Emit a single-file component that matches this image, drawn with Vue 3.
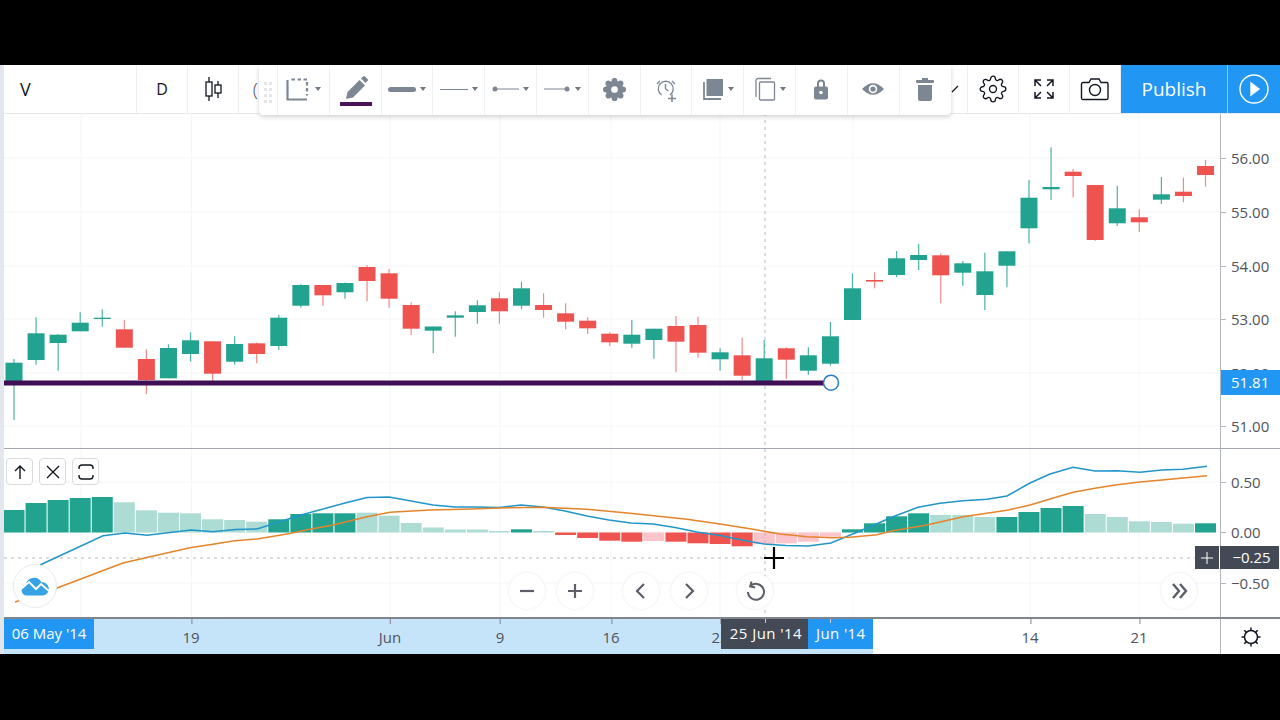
<script setup>
const raw = [
  [362.7,382,359,420,'g'],[333.3,360,317.3,364.7,'g'],[334.7,343,334,370.7,'g'],[322.7,331.3,312.3,331.3,'g'],[317.7,319,309.3,326.7,'g'],
  [329.3,347.7,320,347.7,'r'],[359,380,349.3,394,'r'],[348,378.3,344.3,378.3,'g'],[340.3,354,332.3,361.7,'g'],[341.3,373.7,341.3,381.7,'r'],
  [344,361.7,336.3,364.7,'g'],[343.3,354,342.6,363.3,'r'],[317.7,346,315,350,'g'],[285,305.7,284.3,307.7,'g'],[285,295.3,285,305.7,'r'],
  [283,292.3,282.6,298.7,'g'],[267,281,265,301.3,'r'],[273.3,298.7,269,307.7,'r'],[305,328.7,302.3,335,'r'],[326.5,330.7,326.5,353.3,'g'],
  [315.3,317.7,311.3,336.7,'g'],[305.3,312,300.3,323.7,'g'],[298.3,311.3,292.3,323.7,'r'],[288.3,305.7,281.7,309.3,'g'],[305,310,293.3,317.7,'r'],
  [313.3,321.7,303.3,329.3,'r'],[320.7,328.3,317.3,334,'r'],[333.7,342.3,332.3,346,'r'],[334.7,343.7,320,347.7,'g'],[328.7,340,328.7,358.7,'g'],
  [326,341.7,316,372.3,'r'],[325,352.7,316.7,357.7,'r'],[352.3,359.3,348.3,370.7,'g'],[355.3,375.7,337.7,380,'r'],[358.3,382,340,382,'g'],
  [348.3,359.7,347.3,379,'r'],[355.3,370.7,347.3,375,'g'],[336.3,363.7,322,365.7,'g'],[288.3,320,273.3,320,'g'],[280,281.6,272.3,288.3,'r'],
  [258.3,275,251,277.3,'g'],[255,260,244,270,'g'],[255.3,275.3,253.3,303.3,'r'],[263.3,272.7,261,285.7,'g'],[271.3,295,252.7,310,'g'],
  [251.3,265.7,251.3,287.3,'g'],[197.7,228.3,180,243.3,'g'],[187,189.3,147.3,200,'g'],[171.7,176,169,197.3,'r'],[185,240,185,240.7,'r'],
  [208.3,223.3,185.7,226,'g'],[217.3,222.3,209.3,232,'r'],[194.3,199.7,177,204,'g'],[191.7,196,177.7,202.3,'r'],[166,175,160,186.7,'r']
]
const candles = raw.map((c, i) => ({ x: 14 + i * 22.065, top: c[0], bottom: c[1], hi: c[2], lo: c[3], color: c[4] === 'g' ? '#22a38f' : '#ef5350', wick: c[4] === 'g' ? '#4db3a4' : '#f08a86' }))

const histRaw = [
  [510,'d'],[503,'d'],[500,'d'],[498,'d'],[497,'d'],[502.3,'l'],[510.3,'l'],[512.7,'l'],[513.3,'l'],[519.3,'l'],
  [520,'l'],[521.7,'l'],[519.3,'d'],[514,'d'],[513.3,'d'],[513.3,'d'],[512.7,'l'],[515.7,'l'],[523,'l'],[527.5,'l'],
  [529.5,'l'],[529.5,'l'],[531,'l'],[529.3,'d'],[531,'l'],[535,'r'],[538,'r'],[540.7,'r'],[541.7,'r'],[541,'p'],
  [541.7,'r'],[543.3,'r'],[544,'r'],[546.3,'r'],[544,'p'],[543.3,'p'],[541.7,'p'],[536.7,'p'],[529.3,'d'],[523.3,'d'],
  [516.3,'d'],[513.3,'d'],[515,'l'],[515,'l'],[517,'l'],[517,'d'],[512,'d'],[508,'d'],[506,'d'],[514,'l'],
  [517,'l'],[521.3,'l'],[522,'l'],[523.7,'l'],[523.3,'d']
]
const histColors = { d: '#22a38f', l: '#acdcd3', r: '#ef5350', p: '#fbc4ca' }
const zero = 532.5
const bars = histRaw.map((b, i) => ({
  x: 3.5 + i * 22.065,
  y: Math.min(b[0], zero),
  h: Math.abs(b[0] - zero),
  fill: histColors[b[1]]
}))

const macd = '40,565 103,535.7 125,533 147,535.3 191,530 213,531.7 235,529.5 257,529 279,522 301,515 345,503 367,497.5 389,497 433,505 455,507 477,507 499,507.5 521,505 543,507 565,511 587,516 609,520 631,523 653,524 675,527.5 697,532 720,535.5 742,540 764,544 786,545.5 808,546 831,543 860,531 893,516.7 918,507.3 940,503.3 963,500.7 987,499.3 1007,496 1030,483 1050,474 1073,467.3 1095,471 1117,470.7 1140,472.3 1162,470 1183,469.3 1207,466.3'
const signal = '15,602 57,588 123,563 150,556.7 190,547.7 213,544.3 233,541 257,539 287,534 310,529.3 333,525 367,516.7 390,512.3 430,510 463,509.3 500,508 543,507.3 587,509.3 630,513.3 687,519.3 720,524 753,529.3 780,534 807,536.7 833,537.7 850,537.3 877,534.7 893,530.7 927,525 963,516.7 1007,510.3 1030,505 1050,499 1073,492.3 1095,488.3 1117,484.7 1140,482 1162,480 1183,478 1207,475.7'

const gridX = [81, 191.5, 390, 500, 611, 720, 853, 1030, 1139]
const gridPrice = [158, 212, 266, 319, 373, 426]
const gridInd = [482, 532, 583]

const priceLabels = [
  { y: 158, t: '56.00' }, { y: 212, t: '55.00' }, { y: 266, t: '54.00' }, { y: 319, t: '53.00' }, { y: 373, t: '52.00' }, { y: 426, t: '51.00' }
]
const indLabels = [{ y: 482, t: '0.50' }, { y: 532, t: '0.00' }, { y: 583, t: '−0.50' }]
const timeLabels = [
  { x: 191, t: '19' }, { x: 390, t: 'Jun' }, { x: 500, t: '9' }, { x: 611, t: '16' }, { x: 720, t: '23' }, { x: 1030, t: '14' }, { x: 1139, t: '21' }
]
const gearPath = 'M19.4 15a1.65 1.65 0 0 0 .33 1.82l.06.06a2 2 0 0 1 0 2.83 2 2 0 0 1-2.83 0l-.06-.06a1.65 1.65 0 0 0-1.82-.33 1.65 1.65 0 0 0-1 1.51V21a2 2 0 0 1-2 2 2 2 0 0 1-2-2v-.09A1.65 1.65 0 0 0 9 19.4a1.65 1.65 0 0 0-1.82.33l-.06.06a2 2 0 0 1-2.83 0 2 2 0 0 1 0-2.83l.06-.06a1.65 1.65 0 0 0 .33-1.82 1.65 1.65 0 0 0-1.51-1H3a2 2 0 0 1-2-2 2 2 0 0 1 2-2h.09A1.65 1.65 0 0 0 4.6 9a1.65 1.65 0 0 0-.33-1.82l-.06-.06a2 2 0 0 1 0-2.83 2 2 0 0 1 2.83 0l.06.06a1.65 1.65 0 0 0 1.82.33H9a1.65 1.65 0 0 0 1-1.51V3a2 2 0 0 1 2-2 2 2 0 0 1 2 2v.09a1.65 1.65 0 0 0 1 1.51 1.65 1.65 0 0 0 1.82-.33l.06-.06a2 2 0 0 1 2.83 0 2 2 0 0 1 0 2.83l-.06.06a1.65 1.65 0 0 0-.33 1.82V9a1.65 1.65 0 0 0 1.51 1H21a2 2 0 0 1 2 2 2 2 0 0 1-2 2h-.09a1.65 1.65 0 0 0-1.51 1z'
</script>

<template>
  <div class="page">
    <div class="screen">
      <div class="strip"></div>
      <div class="main">
        <header class="topbar">
          <div class="cell symbol">V</div>
          <div class="cell interval">D</div>
          <div class="cell">
            <svg width="22" height="26" viewBox="0 0 22 26" fill="none" stroke="#131722" stroke-width="1.3">
              <path d="M7 1v24M16 5v17"/>
              <rect x="4" y="6" width="6" height="14" fill="#fff"/>
              <rect x="13" y="9" width="6" height="8" fill="#fff"/>
            </svg>
          </div>
          <div class="cell paren">(</div>
          <div class="spacer">
            <svg class="tail" width="8" height="8" viewBox="0 0 8 8" fill="none" stroke="#131722" stroke-width="1.2"><path d="M1 7l6-6"/></svg>
          </div>
          <div class="cell">
            <svg width="28" height="28" viewBox="0 0 24 24" fill="none" stroke="#131722" stroke-width="1.15"><circle cx="12" cy="12" r="3"/><path :d="gearPath"/></svg>
          </div>
          <div class="cell">
            <svg width="24" height="24" viewBox="0 0 24 24" fill="none" stroke="#131722" stroke-width="1.5">
              <path d="M3 9V3h6M3 3l6 6M15 3h6v6M21 3l-6 6M3 15v6h6M3 21l6-6M21 15v6h-6M21 21l-6-6"/>
            </svg>
          </div>
          <div class="cell">
            <svg width="30" height="26" viewBox="0 0 30 26" fill="none" stroke="#131722" stroke-width="1.4">
              <path d="M3 6.5h6l2-3.5h8l2 3.5h6a1.5 1.5 0 0 1 1 1.5v14a1.5 1.5 0 0 1-1.5 1.5h-23A1.5 1.5 0 0 1 1.5 22V8A1.5 1.5 0 0 1 3 6.5z"/>
              <circle cx="15" cy="14" r="5.5"/>
            </svg>
          </div>
          <button class="publish">Publish</button>
          <button class="play">
            <svg width="32" height="32" viewBox="0 0 32 32" fill="none" stroke="#fff" stroke-width="1.4">
              <circle cx="16" cy="16" r="14"/>
              <path d="M13 10l8 6-8 6z" fill="#fff"/>
            </svg>
          </button>
        </header>

        <section class="row price-row">
          <div class="pane">
            <svg class="canvas" width="1216" height="334" viewBox="4 114 1216 334">
              <line v-for="x in gridX" :key="'px'+x" :x1="x" :x2="x" y1="113" y2="448" class="grid"/>
              <line v-for="y in gridPrice" :key="'py'+y" x1="4" x2="1220" :y1="y" :y2="y" class="grid"/>
              <line x1="765" x2="765" y1="113" y2="448" class="cross"/>
              <g v-for="(c, i) in candles" :key="i">
                <line :x1="c.x" :x2="c.x" :y1="c.hi" :y2="c.lo" :stroke="c.wick" stroke-width="1.2"/>
                <rect :x="c.x - 8.5" :y="c.top" width="17" :height="c.bottom - c.top" :fill="c.color"/>
              </g>
              <line x1="4" x2="830" y1="383" y2="383" stroke="#3f0f55" stroke-width="5"/>
              <circle cx="831" cy="382.7" r="7.5" fill="#fff" stroke="#2a7fc4" stroke-width="1.5"/>
            </svg>
          </div>
          <div class="axis">
            <span v-for="l in priceLabels" :key="l.t" class="tick" :style="{ top: (l.y - 114) + 'px' }">{{ l.t }}</span>
            <span class="last-price">51.81</span>
          </div>
        </section>

        <section class="row ind-row">
          <div class="pane">
            <svg class="canvas" width="1216" height="168" viewBox="4 449 1216 168">
              <line v-for="x in gridX" :key="'ix'+x" :x1="x" :x2="x" y1="449" y2="617" class="grid"/>
              <line v-for="y in gridInd" :key="'iy'+y" x1="4" x2="1220" :y1="y" :y2="y" class="grid"/>
              <rect v-for="(b, i) in bars" :key="i" :x="b.x" :y="b.y" width="21" :height="b.h" :fill="b.fill"/>
              <line x1="765" x2="765" y1="449" y2="617" class="cross"/>
              <line x1="4" x2="1220" y1="558" y2="558" class="cross"/>
              <polyline :points="macd" fill="none" stroke="#2196c8" stroke-width="1.5"/>
              <polyline :points="signal" fill="none" stroke="#e4842b" stroke-width="1.5"/>
            </svg>

            <div class="legend">
              <button class="mini">
                <svg width="16" height="16" viewBox="0 0 16 16" fill="none" stroke="#131722" stroke-width="1.4"><path d="M8 15V2M3 7l5-5 5 5"/></svg>
              </button>
              <button class="mini">
                <svg width="16" height="16" viewBox="0 0 16 16" fill="none" stroke="#131722" stroke-width="1.4"><path d="M2 2l12 12M14 2L2 14"/></svg>
              </button>
              <button class="mini">
                <svg width="18" height="18" viewBox="0 0 18 18" fill="none" stroke="#131722" stroke-width="1.4"><path d="M2 6V5a3 3 0 0 1 3-3h8a3 3 0 0 1 3 3v1M2 12v1a3 3 0 0 0 3 3h8a3 3 0 0 0 3-3v-1"/></svg>
              </button>
            </div>

            <div class="logo-btn">
              <svg width="30" height="20" viewBox="0 0 30 20">
                <path d="M7 19.5a5.5 5.5 0 0 1-1.4-10.8 8.5 8.5 0 0 1 15.9-2.3 6.5 6.5 0 0 1 1.5 13.1z" fill="#35a2e4"/>
                <path d="M1 13l8-7 7 7 5-5 8 7" fill="none" stroke="#fff" stroke-width="2"/>
              </svg>
            </div>

            <div class="nav">
              <div class="nav-group">
                <button class="round">
                  <svg width="18" height="18" viewBox="0 0 18 18" stroke="#5c5f69" stroke-width="2.2"><path d="M2 9h14"/></svg>
                </button>
                <button class="round">
                  <svg width="18" height="18" viewBox="0 0 18 18" stroke="#5c5f69" stroke-width="2.2"><path d="M2 9h14M9 2v14"/></svg>
                </button>
              </div>
              <div class="nav-group">
                <button class="round">
                  <svg width="18" height="18" viewBox="0 0 18 18" fill="none" stroke="#5c5f69" stroke-width="2.2"><path d="M12 2L5 9l7 7"/></svg>
                </button>
                <button class="round">
                  <svg width="18" height="18" viewBox="0 0 18 18" fill="none" stroke="#5c5f69" stroke-width="2.2"><path d="M6 2l7 7-7 7"/></svg>
                </button>
              </div>
              <button class="round">
                <svg width="22" height="22" viewBox="0 0 22 22" fill="none" stroke="#5c5f69" stroke-width="2">
                  <path d="M6.5 6a8 8 0 1 1-2.5 6"/>
                  <path d="M7.5 1.5L6.2 6.4l5 1"/>
                </svg>
              </button>
            </div>

            <button class="round forward">
              <svg width="18" height="18" viewBox="0 0 18 18" fill="none" stroke="#5c5f69" stroke-width="2.4"><path d="M3 2l6 7-6 7M10 2l6 7-6 7"/></svg>
            </button>

            <svg class="cursor" width="20" height="22" viewBox="0 0 20 22" stroke="#000" stroke-width="2.2"><path d="M0 11h20M10 0v22"/></svg>

            <button class="plus-btn">
              <svg width="12" height="12" viewBox="0 0 12 12" stroke="#fff" stroke-width="1"><path d="M0 6h12M6 0v12"/></svg>
            </button>
          </div>
          <div class="axis ind-axis">
            <span v-for="l in indLabels" :key="l.t" class="tick" :style="{ top: (l.y - 449) + 'px' }">{{ l.t }}</span>
            <span class="cross-price">−0.25</span>
          </div>
        </section>

        <footer class="row time-row">
          <div class="time-scale">
            <div class="range"></div>
            <span v-for="l in timeLabels" :key="l.t" class="time-tick" :style="{ left: (l.x - 4) + 'px' }">{{ l.t }}</span>
            <span class="date start">06 May '14</span>
            <span class="date end">Jun '14</span>
            <span class="date cursor-date">25 Jun '14</span>
          </div>
          <div class="corner">
            <svg width="24" height="24" viewBox="0 0 24 24" fill="none" stroke="#131722" stroke-width="1.5">
              <circle cx="12" cy="12" r="6.5"/>
              <path d="M12 2.5v3M12 18.500v3M2.500 12h3M18.500 12h3M5.300 5.300l2.100 2.100M16.600 16.600l2.100 2.100M5.300 18.700l2.100-2.100M16.600 7.400l2.100-2.100"/>
            </svg>
          </div>
        </footer>
      </div>

      <!-- floating drawing toolbar -->
      <div class="floating">
        <div class="grip">
          <i v-for="n in 8" :key="n"></i>
        </div>
        <div class="f-cell">
          <svg width="26" height="26" viewBox="0 0 26 26" fill="none" stroke="#7d8794" stroke-width="2.2">
            <path d="M2.500 4v19.500H22"/>
            <path d="M6.500 3.500h15.500v16" stroke-dasharray="3.500 2.500"/>
          </svg>
          <span class="caret"></span>
        </div>
        <div class="f-cell pencil">
          <svg width="26" height="26" viewBox="0 0 26 26" fill="#7d8794">
            <path d="M4 25l1.500-7L17.500 6l5.500 5.500L11 23.500z"/>
            <path d="M19 4.500l2-2q1-1 2 0l2.500 2.500q1 1 0 2l-2 2z"/>
          </svg>
          <span class="pencil-bar"></span>
        </div>
        <div class="f-cell">
          <span class="stroke thick"></span>
          <span class="caret"></span>
        </div>
        <div class="f-cell">
          <span class="stroke thin"></span>
          <span class="caret"></span>
        </div>
        <div class="f-cell">
          <svg width="27" height="10" viewBox="0 0 27 10"><path d="M2 5h25" stroke="#7d8794" stroke-width="1"/><circle cx="3" cy="5" r="2.500" fill="#7d8794"/></svg>
          <span class="caret"></span>
        </div>
        <div class="f-cell">
          <svg width="27" height="10" viewBox="0 0 27 10"><path d="M0 5h25" stroke="#7d8794" stroke-width="1"/><circle cx="23" cy="5" r="2.500" fill="#7d8794"/></svg>
          <span class="caret"></span>
        </div>
        <div class="f-cell">
          <svg width="23" height="23" viewBox="0 0 24 24" fill="#7d8794" stroke="#7d8794" stroke-width="2.200"><path :d="gearPath"/><circle cx="12" cy="12" r="3.500" fill="#fff" stroke="none"/></svg>
        </div>
        <div class="f-cell">
          <svg width="26" height="26" viewBox="0 0 26 26" fill="none" stroke="#7d8794" stroke-width="1.400">
            <path d="M7 5l-3 3M19 5l3 3"/>
            <path d="M17 19a7.500 7.500 0 1 0-8.500 0"/>
            <path d="M12.500 8v5l3 2"/>
            <path d="M15 22.500h8M19 18.500v8" stroke-width="1.600"/>
          </svg>
        </div>
        <div class="f-cell">
          <svg width="22" height="22" viewBox="0 0 22 22">
            <path d="M2 4v17h17" fill="none" stroke="#7d8794" stroke-width="1.800"/>
            <rect x="4.500" y="1" width="16.500" height="17" fill="#7d8794"/>
          </svg>
          <span class="caret"></span>
        </div>
        <div class="f-cell">
          <svg width="22" height="24" viewBox="0 0 22 24" fill="none" stroke="#7d8794" stroke-width="1.300">
            <path d="M2 20V3.500a2 2 0 0 1 2-2h13"/>
            <rect x="5.500" y="5" width="15" height="18" fill="#fff" rx="1"/>
          </svg>
          <span class="caret"></span>
        </div>
        <div class="f-cell">
          <svg width="18" height="24" viewBox="0 0 18 24" fill="#7d8794">
            <path d="M5 10V6.500a4 4 0 0 1 8 0V10h-2V6.500a2 2 0 0 0-4 0V10z"/>
            <rect x="2" y="9.500" width="14" height="13" rx="2"/>
            <circle cx="9" cy="15.500" r="1.800" fill="#fff"/>
          </svg>
        </div>
        <div class="f-cell">
          <svg width="24" height="18" viewBox="0 0 24 18">
            <path d="M1 9q11-11.500 22 0q-11 11.500-22 0z" fill="#7d8794"/>
            <circle cx="12" cy="9" r="4.300" fill="#fff"/>
            <circle cx="12" cy="9" r="2.600" fill="#7d8794"/>
          </svg>
        </div>
        <div class="f-cell">
          <svg width="20" height="24" viewBox="0 0 20 24" fill="#7d8794">
            <rect x="7" y="1" width="6" height="3"/>
            <rect x="1" y="3" width="18" height="3" rx="1"/>
            <path d="M3 8h14v14a2 2 0 0 1-2 2H5a2 2 0 0 1-2-2z"/>
          </svg>
        </div>
      </div>
    </div>
  </div>
</template>

<style>
html, body { margin: 0; background: #000; }
</style>

<style scoped>
.page {
  width: 1280px;
  height: 720px;
  background: #000;
  padding-top: 65px;
  box-sizing: border-box;
  font-family: "Open Sans", "Liberation Sans", sans-serif;
  overflow: hidden;
}
.screen {
  position: relative;
  display: flex;
  height: 589px;
  background: #fff;
  color: #50535e;
}
.strip { width: 4px; flex: none; background: #e3e6ed; }
.main { width: 1276px; display: flex; flex-direction: column; }

.topbar {
  display: flex;
  height: 49px;
  box-sizing: border-box;
  border-bottom: 1px solid #e6e8ee;
  flex: none;
}
.cell {
  width: 51px;
  flex: none;
  box-sizing: border-box;
  display: flex;
  align-items: center;
  justify-content: center;
  border-right: 1px solid #eceef2;
  color: #131722;
}
.symbol { width: 133px; justify-content: flex-start; padding-left: 16px; font-size: 18px; font-weight: 400; }
.interval { font-size: 16px; }
.paren { justify-content: flex-end; padding-right: 32px; font-size: 19px; font-weight: 300; border-right: 0; color: #50535e; }
.spacer {
  flex: 1;
  border-right: 1px solid #eceef2;
  display: flex;
  align-items: center;
  justify-content: flex-end;
  padding-right: 8px;
}
.publish {
  width: 107px;
  flex: none;
  border: 0;
  background: #2196f3;
  color: #fff;
  font: 400 19px "Open Sans", "Liberation Sans", sans-serif;
  padding: 0;
  margin: 0;
  border-right: 1px solid #8ec8f5;
}
.play {
  width: 52px;
  flex: none;
  border: 0;
  padding: 0;
  background: #2196f3;
  display: flex;
  align-items: center;
  justify-content: center;
}

.row { display: flex; flex: none; }
.price-row { height: 335px; border-bottom: 1px solid #a4a8b0; box-sizing: border-box; }
.ind-row { height: 168px; }
.pane { position: relative; width: 1216px; flex: none; }
.canvas { display: block; }
.grid { stroke: #f4f5f7; stroke-width: 1; }
.cross { stroke: #b4b7be; stroke-width: 1; stroke-dasharray: 3 4; }

.axis {
  position: relative;
  flex: 1;
  border-left: 1px solid #b2b5be;
  font-size: 15px;
  color: #50535e;
}
.tick {
  position: absolute;
  left: 10px;
  transform: translateY(-50%);
  line-height: 20px;
}
.tick::before {
  content: "";
  position: absolute;
  left: -10px;
  top: 10px;
  width: 5px;
  height: 1px;
  background: #b2b5be;
}
.last-price {
  position: absolute;
  top: 256px;
  left: 0;
  right: 0;
  height: 25px;
  line-height: 24px;
  background: #2196f3;
  color: #fff;
  padding-left: 10px;
}
.cross-price {
  position: absolute;
  top: 97px;
  left: -1px;
  width: 59px;
  height: 23px;
  line-height: 22px;
  background: #434a55;
  color: #fff;
  text-align: center;
  padding-left: 4px;
  box-sizing: border-box;
}

.legend { position: absolute; left: 2px; top: 9px; display: flex; gap: 6px; }
.mini {
  width: 27px;
  height: 27px;
  padding: 0;
  box-sizing: border-box;
  background: #fff;
  border: 1px solid #d9dbe0;
  border-radius: 4px;
  display: flex;
  align-items: center;
  justify-content: center;
}
.logo-btn {
  position: absolute;
  left: 9px;
  top: 115px;
  width: 44px;
  height: 44px;
  box-sizing: border-box;
  border-radius: 50%;
  background: #fff;
  border: 1px solid #e9ebef;
  display: flex;
  align-items: center;
  justify-content: center;
}
.nav {
  position: absolute;
  left: 505px;
  top: 124px;
  display: flex;
  gap: 30px;
}
.nav-group { display: flex; gap: 12px; }
.round {
  width: 36px;
  height: 36px;
  padding: 0;
  border: 0;
  border-radius: 50%;
  background: #fff;
  box-shadow: 0 0 3px rgba(0, 0, 0, .1);
  display: flex;
  align-items: center;
  justify-content: center;
}
.forward { position: absolute; left: 1157px; top: 124px; }
.cursor { position: absolute; left: 760px; top: 98px; }
.plus-btn {
  position: absolute;
  left: 1191px;
  top: 97px;
  width: 24px;
  height: 23px;
  padding: 0;
  border: 0;
  background: #434a55;
  display: flex;
  align-items: center;
  justify-content: center;
}

.time-row { height: 37px; border-top: 2px solid #80848c; box-sizing: border-box; }
.time-scale {
  position: relative;
  width: 1216px;
  flex: none;
  font-size: 15px;
  color: #50535e;
  overflow: hidden;
}
.range { position: absolute; left: 0; top: 0; bottom: 0; width: 869px; background: #c5e3f9; }
.time-tick {
  position: absolute;
  top: 8px;
  transform: translateX(-50%);
  line-height: 20px;
}
.time-tick::before {
  content: "";
  position: absolute;
  left: 50%;
  top: -8px;
  width: 1px;
  height: 5px;
  background: #80848c;
}
.date {
  position: absolute;
  top: 0;
  height: 30px;
  line-height: 29px;
  color: #fff;
}
.date::after {
  content: "";
  position: absolute;
  top: 0;
  width: 1px;
  height: 4px;
  background: #c9ccd2;
}
.start { left: 0; width: 90px; background: #2196f3; text-align: center; }
.start::after { display: none; }
.end {
  left: 804px;
  width: 65px;
  background: #2196f3;
  padding-left: 8px;
  box-sizing: border-box;
  letter-spacing: .4px;
  white-space: nowrap;
}
.end::after { left: 22px; }
.cursor-date {
  left: 717px;
  width: 87px;
  box-sizing: border-box;
  padding-left: 3px;
  background: #434a55;
  text-align: center;
  letter-spacing: .45px;
  white-space: nowrap;
}
.cursor-date::after { left: 44px; }
.corner {
  flex: 1;
  border-left: 1px solid #b2b5be;
  display: flex;
  align-items: center;
  justify-content: center;
}

.floating {
  position: absolute;
  left: 259px;
  top: 0;
  height: 50px;
  width: 692px;
  display: flex;
  background: #fff;
  box-shadow: 0 2px 5px rgba(0, 0, 0, .18);
  border-radius: 0 0 4px 4px;
}
.grip {
  width: 18px;
  box-sizing: border-box;
  padding-top: 17px;
  padding-left: 5px;
  display: grid;
  grid-template-columns: 3px 3px;
  grid-auto-rows: 3px;
  gap: 3px 2px;
  align-content: start;
}
.grip i { background: #e3e5ea; }
.f-cell {
  position: relative;
  width: 51.8px;
  flex: none;
  box-sizing: border-box;
  border-left: 1px solid #eef0f3;
  display: flex;
  align-items: center;
  justify-content: center;
  gap: 4px;
  padding-bottom: 2px;
}
.caret {
  width: 0;
  height: 0;
  border-left: 3.5px solid transparent;
  border-right: 3.5px solid transparent;
  border-top: 4px solid #6f7782;
}
.stroke { display: block; width: 28px; background: #7d8794; }
.thick { height: 5px; border-radius: 3px; }
.thin { height: 1px; }
.pencil { align-items: flex-start; padding-top: 9px; padding-bottom: 0; }
.pencil-bar {
  position: absolute;
  left: 10px;
  bottom: 9px;
  width: 32px;
  height: 4px;
  background: #4a1259;
}
</style>
